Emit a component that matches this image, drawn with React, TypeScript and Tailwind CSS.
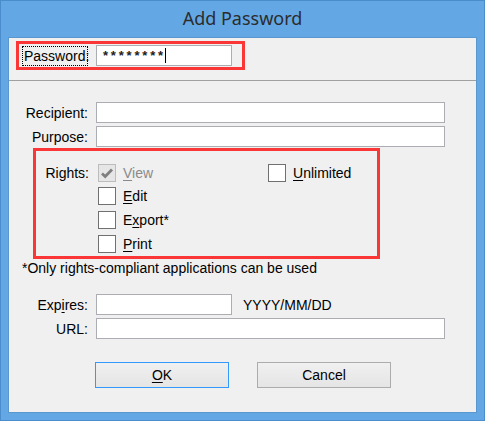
import React from "react";

function Box({ disabled = false, checked = false }: { disabled?: boolean; checked?: boolean }) {
  return (
    <div
      className={
        "w-[18px] h-[18px] border flex items-center justify-center shrink-0 " +
        (disabled ? "bg-[#e6e6e6] border-[#bcbcbc]" : "bg-white border-[#707070]")
      }
    >
      {checked && (
        <svg width="14" height="12" viewBox="0 0 14 12">
          <path d="M2 6.5 L5.2 9.5 L12 2.5" fill="none" stroke="#7f7f7f" strokeWidth="2.8" />
        </svg>
      )}
    </div>
  );
}

function Check({ children, disabled = false, checked = false }: { children: React.ReactNode; disabled?: boolean; checked?: boolean }) {
  return (
    <div className="flex items-center h-[18px]">
      <Box disabled={disabled} checked={checked} />
      <span className={"ml-[7px] leading-[16px] " + (disabled ? "text-[#8a8a8a]" : "text-black")}>{children}</span>
    </div>
  );
}

function Input({ className = "" }: { className?: string }) {
  return <div className={"h-[21px] bg-white border border-[#abadb3] " + className} />;
}

export default function App() {
  return (
    <div className="w-[485px] h-[421px] bg-[#63a8e4] border border-[#4b8dcc] flex flex-col font-['Liberation_Sans',Arial,sans-serif] text-[14px] text-black">
      <div className="h-[36px] flex items-center justify-center pb-[1px] font-['Noto_Sans',sans-serif] text-[18px] text-[#2c2c2c]">
        Add Password
      </div>
      <div className="mx-[7px] mb-[7px] flex-1 bg-[#f0f0f0] border border-[#5b97cf] flex flex-col">
        {/* password box */}
        <div className="mt-[3px] ml-[7px] w-[229px] h-[29px] border-[3px] border-[#fa3636] flex items-center pl-[3px]">
          <div className="w-[66px] h-[20px] border border-dotted border-black flex items-center pl-[1px] leading-[16px]">
            Password:
          </div>
          <div className="ml-[8px] w-[136px] h-[21px] bg-white border border-[#abadb3] flex items-center pl-[6px]">
            <span className="tracking-[2.8px] font-bold text-[13px] leading-[16px] text-[#222]">********</span>
            <span className="w-px h-[15px] bg-black -ml-[1px]" />
          </div>
        </div>
        <div className="mt-[10px] h-px bg-[#a0a0a0]" />

        {/* recipient / purpose */}
        <div className="mt-[21px] flex flex-col gap-[3px]">
          <div className="flex items-center">
            <div className="w-[79px] text-right leading-[16px]">Recipient:</div>
            <Input className="ml-[8px] w-[349px]" />
          </div>
          <div className="flex items-center">
            <div className="w-[79px] text-right leading-[16px]">Purpose:</div>
            <Input className="ml-[8px] w-[349px]" />
          </div>
        </div>

        {/* rights */}
        <div className="mt-[1px] ml-[24px] w-[347px] h-[111px] border-[3px] border-[#fa3636] pt-[13px] flex flex-col">
          <div className="flex items-center">
            <div className="w-[62px] text-right pr-[9px] leading-[16px]">Rights:</div>
            <div className="w-[170px]">
              <Check disabled checked>
                <span className="underline underline-offset-2">V</span>iew
              </Check>
            </div>
            <Check>
              <span className="underline underline-offset-2">U</span>nlimited
            </Check>
          </div>
          <div className="ml-[62px] mt-[5px]">
            <Check>
              <span className="underline underline-offset-2">E</span>dit
            </Check>
          </div>
          <div className="ml-[62px] mt-[6px]">
            <Check>
              E<span className="underline underline-offset-2">x</span>port*
            </Check>
          </div>
          <div className="ml-[62px] mt-[6px]">
            <Check>
              <span className="underline underline-offset-2">P</span>rint
            </Check>
          </div>
        </div>

        <div className="mt-[1px] ml-[13px] leading-[16px]">*Only rights-compliant applications can be used</div>

        {/* expires / url */}
        <div className="mt-[18px] flex flex-col gap-[3px]">
          <div className="flex items-center">
            <div className="w-[79px] text-right leading-[16px]">
              Exp<span className="underline underline-offset-2">i</span>res:
            </div>
            <Input className="ml-[8px] w-[136px]" />
            <div className="ml-[11px] leading-[16px]">YYYY/MM/DD</div>
          </div>
          <div className="flex items-center">
            <div className="w-[79px] text-right leading-[16px]">URL:</div>
            <Input className="ml-[8px] w-[349px]" />
          </div>
        </div>

        {/* buttons */}
        <div className="mt-[23px] ml-[86px] flex gap-[28px]">
          <button className="w-[134px] h-[26px] border border-[#3399ff] bg-gradient-to-b from-[#f0f0f0] to-[#e5e5e5] flex items-center justify-center leading-[16px]">
            <span>
              <span className="underline underline-offset-2">O</span>K
            </span>
          </button>
          <button className="w-[134px] h-[26px] border border-[#acacac] bg-gradient-to-b from-[#f0f0f0] to-[#e5e5e5] flex items-center justify-center leading-[16px]">
            Cancel
          </button>
        </div>
      </div>
    </div>
  );
}
